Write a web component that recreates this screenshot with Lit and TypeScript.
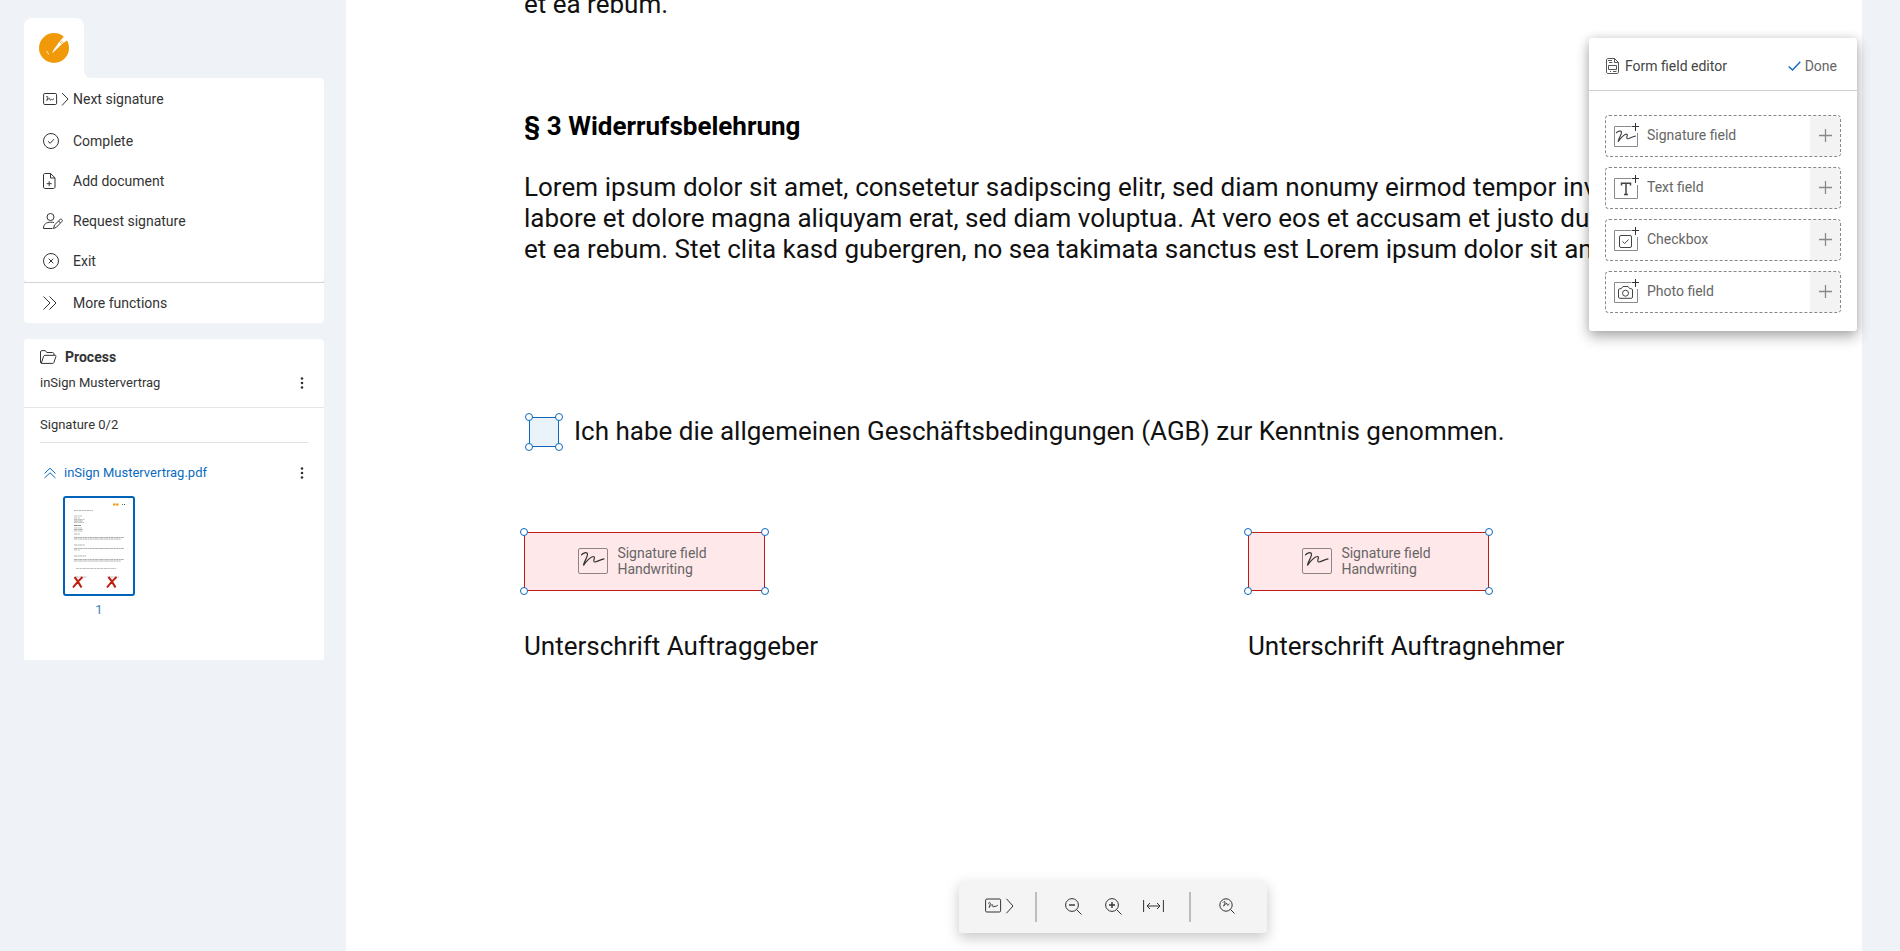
import { LitElement, html, css, svg, TemplateResult } from "lit";
import { customElement, property } from "lit/decorators.js";

type Shape = { w: number; h: number; body: TemplateResult };

const squiggle = svg`<path stroke-linecap="round" d="M3.500 6.800C5 5 9 3.600 9.500 6C10 9 6 13 5.500 17.500C8 13.500 13 8.200 15.500 8.500C18 8.800 14.500 12.500 16.200 13.800C18 15 21 11.800 26 10.800" />`;

const plusFrame = svg`<path stroke="#8a8a8a" d="M17.500 3.500H.5V23.500H23.500V10" /><path stroke="#333" d="M21.500 0V8M18 3.500H25" />`;

const icons: Record<string, Shape> = {
  next: {
    w: 26, h: 14,
    body: svg`<rect x=".6" y="1.500" width="13" height="11" rx="1.200" />
      <path stroke-width=".9" d="M3 5.300C4 4 5 4.200 4.800 5.500C4.600 6.700 4 7.500 3.800 8.600C4.500 7.500 6.300 5.800 6.800 6.500C7.100 7.100 6.500 8.100 7.400 8.100L8.800 7.500L9.600 7.700L11 6.800" />
      <path d="M19 1L25 7L19 13.500" />`,
  },
  complete: { w: 16, h: 16, body: svg`<circle cx="8" cy="8" r="7.500" /><path d="M5 8.300L7.200 10.300L11 6.200" />` },
  add: {
    w: 16, h: 16,
    body: svg`<path d="M7.500 .5H2C1.200 .5 .5 1.200 .5 2V14C.5 14.800 1.200 15.500 2 15.500H10.500C11.300 15.500 12 14.800 12 14V4.800L7.500 .5V5H12M6.200 8.200V13.200M3.700 10.700H8.700" />`,
  },
  request: {
    w: 20, h: 16,
    body: svg`<circle cx="7.500" cy="4" r="3.500" /><path d="M11 9.500C10 9.300 8.800 9.200 7.500 9.200C3.500 9.200 .5 11 .5 15.500H9.500M10.500 15.500L11.500 12L17 6.600C17.600 6 18.300 6 18.900 6.600C19.500 7.200 19.500 7.900 18.900 8.500L13.500 14.200L10.500 15.500M15.500 8L17.500 10" />`,
  },
  exit: { w: 16, h: 16, body: svg`<circle cx="8" cy="8" r="7.500" /><path d="M5.700 5.700L10.300 10.300M10.300 5.700L5.700 10.300" />` },
  more: { w: 14, h: 16, body: svg`<path d="M.5 1.500L7 8L.5 14.500M6.500 1.500L13 8L6.500 14.500" />` },
  folder: {
    w: 17, h: 14,
    body: svg`<path d="M.5 12V2C.5 1.200 1 .6 1.800 .6H5L7 2.500H12.500C13.300 2.500 14 3.200 14 4V5.300M1.300 13.300L3.600 6.300C3.800 5.700 4.300 5.300 5 5.300H15C15.800 5.300 16.200 5.900 15.900 6.600L13.900 12.500C13.700 13 13.300 13.400 12.800 13.400H1.800C1 13.400 .5 12.800 .5 12" />`,
  },
  dots: {
    w: 4, h: 12,
    body: svg`<g fill="currentColor" stroke="none"><circle cx="2" cy="1.500" r="1.300" /><circle cx="2" cy="6" r="1.300" /><circle cx="2" cy="10.500" r="1.300" /></g>`,
  },
  collapse: { w: 12, h: 12, body: svg`<path d="M.5 6.500L6 1.200L11.500 6.500M.5 11L6 5.800L11.500 11" />` },
  form: {
    w: 13, h: 16,
    body: svg`<path stroke-width=".9" d="M8.500 .5H2C1.200 .5 .5 1.200 .5 2V14C.5 14.800 1.200 15.500 2 15.500H11C11.800 15.500 12.500 14.800 12.500 14V4.500L8.500 .5V4.500H12.500M2 2.500H6M3 4.500H6.500M2.500 7.500H10.500V11.500H2.500ZM4 13.500H5M7 13.500H10.500" />`,
  },
  check: { w: 13, h: 10, body: svg`<path stroke-width="1.400" d="M.7 5.500L4.500 9L12.300 .8" />` },
  plus: { w: 13, h: 13, body: svg`<path stroke-width="1.300" d="M6.500 0V13M0 6.500H13" />` },
  fieldSignature: {
    w: 25, h: 24,
    body: svg`${plusFrame}<g transform="translate(-.5 4) scale(.84)" stroke-width="1.400">${squiggle}</g>`,
  },
  fieldText: { w: 25, h: 24, body: svg`${plusFrame}<path stroke-width="1.500" d="M7.500 10.500V8.200H16.500V10.500M12 8.200V19.500M10 19.600H14" />` },
  fieldCheck: { w: 25, h: 24, body: svg`${plusFrame}<rect x="5.500" y="8.500" width="12" height="12" rx="1.500" /><path d="M8.500 14.500L10.700 16.500L14.500 12.500" />` },
  fieldPhoto: {
    w: 25, h: 24,
    body: svg`${plusFrame}<path d="M4.500 11C4.500 10.200 5 9.700 5.800 9.700H7.200L9 7.500H14L15.800 9.700H17.200C18 9.700 18.500 10.200 18.500 11V18C18.500 18.800 18 19.300 17.200 19.300H5.800C5 19.300 4.500 18.800 4.500 18Z" /><circle cx="11.500" cy="14.200" r="3" />`,
  },
  signature: { w: 30, h: 26, body: svg`<rect x=".5" y=".5" width="29" height="25" rx="1.500" stroke="#8d8583" /><g stroke-width="1.200">${squiggle}</g>` },
  toolNext: {
    w: 29, h: 16,
    body: svg`<rect x=".6" y="1" width="15" height="13" rx="1.200" />
      <path stroke-width=".9" d="M3.200 5.500C4.500 4 5.500 4.300 5.300 5.800C5 7.200 4.400 8 4.200 9.500C5 8 7 6 7.600 6.800C8 7.500 7.300 8.900 8.300 8.900L10 8.200L11 8.400L12.800 7.200" />
      <path d="M21.500 .8L28 8L21.500 15.200" />`,
  },
  zoomOut: { w: 17, h: 17, body: svg`<circle cx="7" cy="7" r="6.400" /><path d="M11.600 11.600L16.500 16.500" /><path stroke-width="1.400" d="M4 7H10" />` },
  zoomIn: { w: 17, h: 17, body: svg`<circle cx="7" cy="7" r="6.400" /><path d="M11.600 11.600L16.500 16.500" /><path stroke-width="1.400" d="M4 7H10M7 4V10" />` },
  fit: { w: 21, h: 12, body: svg`<path d="M.6 0V12M20.400 0V12M4 6H17M7 3L4 6L7 9M14 3L17 6L14 9" />` },
  find: {
    w: 16, h: 16,
    body: svg`<circle cx="7" cy="7" r="6.200" /><path d="M11.400 11.400L15.500 15.500" /><path stroke-width=".9" d="M4 4.500C5 3 6.500 3 6 5C5.500 6.500 4.800 7 4.700 8.200C5.500 7 7 4.800 8 5.500C8.500 6.300 7.700 7.500 9 7.200L10.500 5.800" />`,
  },
};

const icon = (name: string) => {
  const i = icons[name];
  return html`<svg width=${i.w} height=${i.h} viewBox="0 0 ${i.w} ${i.h}" fill="none" stroke="currentColor" aria-hidden="true">${i.body}</svg>`;
};

const reset = css`
  * { box-sizing: border-box; }
  svg { display: block; flex: none; }
  button { font: inherit; color: inherit; background: none; border: 0; padding: 0; text-align: left; cursor: pointer; }
  a { color: inherit; text-decoration: none; }
  ul, p, h1, h2, h3 { margin: 0; padding: 0; list-style: none; font-weight: inherit; font-size: inherit; }
`;

@customElement("side-menu")
class SideMenu extends LitElement {
  static styles = [reset, css`
    :host { display: block; font-size: 14px; line-height: 20px; color: #333; }
    .tab { position: relative; width: 60px; height: 60px; display: grid; place-items: center; background: #fff; border-radius: 8px 8px 0 0; }
    .tab::after { content: ""; position: absolute; left: 100%; bottom: 0; width: 8px; height: 8px; background: radial-gradient(circle at 100% 0, transparent 8px, #fff 8px); }
    .card { background: #fff; border-radius: 0 4px 4px 4px; padding: 1px 0; }
    .card li:first-child { margin-bottom: 2px; }
    .item { display: grid; grid-template-columns: 30px 1fr; align-items: center; width: 100%; height: 40px; padding: 0 19px; }
    .item span { white-space: nowrap; }
    .last { border-top: 1px solid #d3d4d6; background: #fff; border-radius: 0 0 4px 4px; }
  `];
  render() {
    const items = [["next", "Next signature"], ["complete", "Complete"], ["add", "Add document"], ["request", "Request signature"], ["exit", "Exit"]];
    return html`
      <a class="tab" href="#" aria-label="inSign">
        <svg width="30" height="30" viewBox="0 0 30 30">
          <circle cx="15" cy="15" r="15" fill="#f09a0a" />
          <path fill="#fff" d="M13.200 20.500L14.500 17L20.500 8.500L25.500 3L28.500 7L22.500 11.500Z" />
          <path stroke="#f09a0a" stroke-width=".8" d="M20.500 8.500L23 11M22 7.500L24.500 10" />
          <path d="M7.500 18L10 21.500" stroke="#fbd79a" stroke-width="1.200" />
        </svg>
      </a>
      <nav>
        <ul class="card">
          ${items.map(([i, t]) => html`<li><button class="item">${icon(i)}<span>${t}</span></button></li>`)}
        </ul>
        <div class="last"><button class="item">${icon("more")}<span>More functions</span></button></div>
      </nav>`;
  }
}

@customElement("process-card")
class ProcessCard extends LitElement {
  static styles = [reset, css`
    :host { display: block; background: #fff; border-radius: 4px 4px 0 0; font-size: 13px; line-height: 20px; color: #333; }
    .head { padding: 8px 16px 14px; border-bottom: 1px solid #e4e4e9; }
    .title { display: flex; align-items: center; gap: 8px; font-size: 14px; font-weight: 700; }
    .row { display: flex; align-items: center; justify-content: space-between; margin-top: 6px; }
    .dots { padding: 4px; }
    .count { margin: 0 16px; padding: 7px 0; border-bottom: 1px solid #e0e0e4; }
    .pages { padding: 20px 16px 40px; }
    .file { display: flex; align-items: center; color: #0b6bc2; }
    .file a { flex: 1; margin-left: 8px; }
    .file .toggle { margin-left: 4px; }
    .file .dots { color: #333; }
    .thumb { display: flex; flex-direction: column; align-items: center; width: 72px; margin: 13px 0 0 23px; color: #3b7fc4; }
    .thumb .frame { width: 72px; height: 100px; border: 2px solid #0062b8; border-radius: 3px; }
    .thumb span { margin-top: 4px; }
  `];
  render() {
    const lines = [[18, 8, 0.4], [20, 6, 0.4], [21.5, 11, 0.4], [23, 9, 0.6], [24.5, 10, 0.4], [27.5, 7, 0.8], [30, 8, 0.4], [31.5, 9, 0.5], [33, 9, 0.4], [36, 6, 0.5], [39.5, 50, 0.5], [41, 47, 0.5], [47, 11, 0.5], [50.5, 50, 0.5], [52, 6, 0.4], [58, 12, 0.5], [61.5, 50, 0.5], [63, 47, 0.5]];
    return html`
      <div class="head">
        <h2 class="title">${icon("folder")}Process</h2>
        <div class="row"><span>inSign Mustervertrag</span><button class="dots" aria-label="Process menu">${icon("dots")}</button></div>
      </div>
      <p class="count">Signature 0/2</p>
      <div class="pages">
        <div class="file">
          <button class="toggle" aria-label="Collapse pages">${icon("collapse")}</button>
          <a href="#">inSign Mustervertrag.pdf</a>
          <button class="dots" aria-label="File menu">${icon("dots")}</button>
        </div>
        <a class="thumb" href="#">
          <svg class="frame" viewBox="0 0 68 96" aria-hidden="true">
            <path stroke="#f09a0a" stroke-width="2.200" d="M48 6.500H50.500M51 6.500H53.500" />
            <path stroke="#444" d="M57 6.500H57.800M59 6.500H60" />
            <path stroke="#aaa" stroke-width=".9" stroke-dasharray="2 .6" d="M9 12.500H28" />
            ${lines.map(([y, w, o]) => svg`<path stroke="#555" stroke-width=".9" stroke-dasharray="3 .4 1.500 .3" opacity=${o} d="M9 ${y}h${w}" />`)}
            <path stroke="#999" stroke-width=".6" stroke-dasharray="3 .5" d="M11 70.500H51M11 79H22M42 79H54" />
            <path stroke="#bf1f0f" stroke-width="2" fill="none" d="M9.500 79Q13 83 16.500 89.500M17.500 79Q12 84 8 89.500M43.500 79Q47 83 50.500 89.500M51.500 79Q46 84 42 89.500" />
          </svg>
          <span>1</span>
        </a>
      </div>`;
  }
}

@customElement("form-field")
class FormField extends LitElement {
  @property() kind = "signature";
  static styles = [reset, css`
    :host { position: relative; box-sizing: border-box; display: flex; align-items: center; justify-content: center; gap: 9px; font-size: 14px; line-height: 16px; color: #666; }
    :host([kind="signature"]) { width: 241px; height: 59px; padding: 0 4px 2px 0; background: #ffe8ea; border: 1px solid #c11b17; }
    :host([kind="checkbox"]) { width: 30px; height: 30px; background: #ebf3fa; border: 1px solid #0b68bd; }
    svg { color: #333; }
    i { position: absolute; width: 8px; height: 8px; border: 1px solid #0b68bd; border-radius: 50%; background: #fff; }
    .tl { left: -5px; top: -5px; } .tr { right: -5px; top: -5px; } .bl { left: -5px; bottom: -5px; } .br { right: -5px; bottom: -5px; }
  `];
  render() {
    return html`
      ${this.kind === "signature" ? html`${icon("signature")}<span>Signature field<br />Handwriting</span>` : ""}
      <i class="tl"></i><i class="tr"></i><i class="bl"></i><i class="br"></i>`;
  }
}

@customElement("document-page")
class DocumentPage extends LitElement {
  static styles = [reset, css`
    :host { display: block; box-sizing: border-box; overflow: hidden; background: #fff; color: #111; font-size: 26px; line-height: 31px; padding: 0 178px; }
    .tail { margin-top: -11px; }
    h2 { margin-top: 91px; font-weight: 700; color: #000; }
    .text { margin-top: 30px; white-space: nowrap; }
    .text span { display: block; }
    .text .spread { white-space: normal; text-align: justify; text-align-last: justify; }
    .agree { display: flex; align-items: center; gap: 15px; margin: 151px 0 0 5px; white-space: nowrap; }
    .signs { display: grid; grid-template-columns: 724fr 436fr; margin-top: 85px; }
    .signs p { margin-top: 40px; white-space: nowrap; }
  `];
  render() {
    return html`
      <p class="tail">et ea rebum.</p>
      <h2>§ 3 Widerrufsbelehrung</h2>
      <p class="text">
        <span class="spread">Lorem ipsum dolor sit amet, consetetur sadipscing elitr, sed diam nonumy eirmod tempor invidunt ut</span>
        <span>labore et dolore magna aliquyam erat, sed diam voluptua. At vero eos et accusam et justo duo</span>
        <span>et ea rebum. Stet clita kasd gubergren, no sea takimata sanctus est Lorem ipsum dolor sit amet.</span>
      </p>
      <div class="agree"><form-field kind="checkbox"></form-field><span>Ich habe die allgemeinen Geschäftsbedingungen (AGB) zur Kenntnis genommen.</span></div>
      <div class="signs">
        <div><form-field kind="signature"></form-field><p>Unterschrift Auftraggeber</p></div>
        <div><form-field kind="signature"></form-field><p>Unterschrift Auftragnehmer</p></div>
      </div>`;
  }
}

@customElement("field-editor")
class FieldEditor extends LitElement {
  static styles = [reset, css`
    :host { display: block; width: 268px; background: #fff; border-radius: 3px; box-shadow: 0 6px 14px rgba(0,0,0,.3), 0 0 10px rgba(0,0,0,.12); font-size: 14px; line-height: 20px; color: #666; }
    header { display: flex; align-items: center; justify-content: space-between; padding: 18px 20px 14px 17px; border-bottom: 1px solid #d0d0d0; }
    h2, .done { display: flex; align-items: center; gap: 6px; }
    h2 { color: #444; }
    .done { gap: 4px; }
    .done svg { color: #0b6bc2; }
    ul { display: grid; gap: 10px; padding: 24px 16px 18px; }
    .field { display: flex; align-items: stretch; width: 100%; height: 42px; border: 1px dashed #888; border-radius: 4px; overflow: hidden; }
    .label { flex: 1; display: flex; align-items: center; gap: 8px; padding: 0 0 2px 8px; }
    .label svg { color: #444; }
    .plus { width: 30px; display: grid; place-items: center; padding-bottom: 2px; background: #f3f3f3; color: #888; }
  `];
  render() {
    const fields = [["fieldSignature", "Signature field"], ["fieldText", "Text field"], ["fieldCheck", "Checkbox"], ["fieldPhoto", "Photo field"]];
    return html`
      <header><h2>${icon("form")}Form field editor</h2><button class="done">${icon("check")}Done</button></header>
      <ul>${fields.map(([i, t]) => html`<li><button class="field"><span class="label">${icon(i)}${t}</span><span class="plus">${icon("plus")}</span></button></li>`)}</ul>`;
  }
}

@customElement("view-toolbar")
class ViewToolbar extends LitElement {
  static styles = [reset, css`
    :host { display: flex; align-items: center; height: 52px; padding: 0 20px; background: #f4f4f4; border-radius: 3px; box-shadow: 0 5px 14px rgba(0,0,0,.22); color: #333; }
    button { display: grid; place-items: center; width: 40px; height: 40px; padding-bottom: 2px; }
    hr { width: 2px; height: 30px; margin: 0 16px; border: 0; background: #bdbdbd; }
  `];
  render() {
    return html`
      <button aria-label="Next signature">${icon("toolNext")}</button>
      <hr />
      <button aria-label="Zoom out">${icon("zoomOut")}</button>
      <button aria-label="Zoom in">${icon("zoomIn")}</button>
      <button aria-label="Fit width">${icon("fit")}</button>
      <hr />
      <button aria-label="Find signature">${icon("find")}</button>`;
  }
}

@customElement("app-root")
class AppRoot extends LitElement {
  static styles = css`
    :host { display: grid; grid-template-columns: 346px minmax(0, 1fr) 38px; position: relative; height: 100vh; overflow: hidden; background: #eff2f6; font-family: Roboto, "Liberation Sans", sans-serif; }
    aside { display: flex; flex-direction: column; gap: 16px; padding: 18px 22px 0 24px; }
    document-page { height: 100%; }
    field-editor { position: absolute; top: 38px; right: 43px; }
    .tools { position: absolute; left: 346px; right: 20px; bottom: 18px; display: flex; justify-content: center; }
  `;
  render() {
    return html`
      <aside><side-menu></side-menu><process-card></process-card></aside>
      <document-page></document-page>
      <field-editor></field-editor>
      <div class="tools"><view-toolbar></view-toolbar></div>`;
  }
}
